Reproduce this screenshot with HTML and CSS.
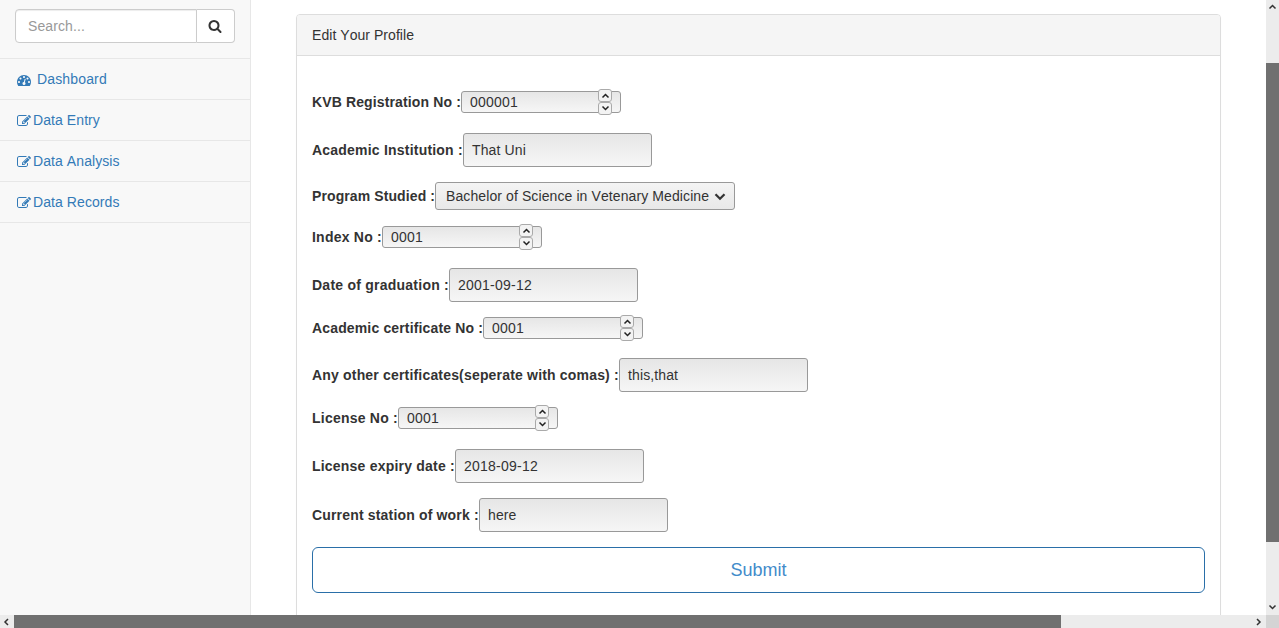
FILE: index.html
```html
<!DOCTYPE html>
<html lang="en">
<head>
<meta charset="utf-8">
<title>Edit Your Profile</title>
<link rel="stylesheet" href="styles.css">
</head>
<body>
<svg class="defs" width="0" height="0" aria-hidden="true">
  <symbol id="search" viewBox="0 0 1792 1792"><path d="M1216 832q0-185-131.5-316.5t-316.5-131.5-316.5 131.5-131.5 316.5 131.5 316.5 316.5 131.5 316.5-131.5 131.5-316.5zm512 832q0 52-38 90t-90 38q-54 0-90-38l-343-342q-179 124-399 124-143 0-273.5-55.5t-225-150-150-225-55.5-273.5 55.5-273.5 150-225 225-150 273.5-55.5 273.5 55.5 225 150 150 225 55.5 273.5q0 220-124 399l343 343q37 37 37 90z"/></symbol>
  <symbol id="edit" viewBox="0 0 1792 1792"><path d="M888 1184l116-116-152-152-116 116v56h96v96h56zm440-720q-16-16-33 1l-350 350q-17 17-1 33t33-1l350-350q17-17 1-33zm80 594v190q0 119-84.5 203.5t-203.5 84.5h-832q-119 0-203.5-84.5t-84.5-203.5v-832q0-119 84.5-203.5t203.5-84.5h832q63 0 117 25 15 7 18 23 3 17-9 29l-49 49q-14 14-32 8-23-6-45-6h-832q-66 0-113 47t-47 113v832q0 66 47 113t113 47h832q66 0 113-47t47-113v-126q0-13 9-22l64-64q15-15 35-7t20 29zm-96-738l288 288-672 672h-288v-288zm444 132l-92 92-288-288 92-92q28-28 68-28t68 28l152 152q28 28 28 68t-28 68z"/></symbol>
  <symbol id="gauge" viewBox="0 0 1792 1792"><path d="M384 1152q0-53-37.500-90.500t-90.500-37.500-90.500 37.500-37.500 90.500 37.500 90.500 90.500 37.500 90.500-37.500 37.500-90.500zm192-448q0-53-37.500-90.500t-90.500-37.500-90.500 37.500-37.500 90.500 37.500 90.500 90.500 37.500 90.500-37.500 37.500-90.500zm428 481l101-382q6-26-7.500-48.500t-38.500-29.500-48 6.500-30 39.500l-101 382q-60 5-107 43.500t-63 98.500q-20 77 20 146t117 89 146-20 89-117q16-60-6-117t-72-91zm660-33q0-53-37.500-90.500t-90.500-37.500-90.500 37.500-37.500 90.500 37.500 90.500 90.500 37.500 90.500-37.500 37.500-90.500zm-640-640q0-53-37.500-90.500t-90.500-37.500-90.500 37.500-37.500 90.500 37.500 90.500 90.500 37.500 90.500-37.500 37.500-90.500zm448 192q0-53-37.500-90.500t-90.500-37.500-90.500 37.500-37.500 90.500 37.500 90.500 90.500 37.500 90.500-37.500 37.500-90.500zm320 448q0 261-141 483-19 29-54 29h-1402q-35 0-54-29-141-221-141-483 0-182 71-348t191-286 286-191 348-71 348 71 286 191 191 286 71 348z"/></symbol>
  <symbol id="chev" viewBox="0 0 12 8"><path d="M2 2l4 4 4-4" fill="none" stroke="currentColor" stroke-width="2"/></symbol>
</svg>
<div class="window">
  <div class="view">
    <aside class="sidebar">
      <div class="search">
        <div class="search-text">Search...</div>
        <div class="search-btn"><svg class="fa"><use href="#search"/></svg></div>
      </div>
      <nav class="menu">
        <a class="item dash"><svg class="fa"><use href="#gauge"/></svg><span>Dashboard</span></a>
        <a class="item"><svg class="fa"><use href="#edit"/></svg><span>Data Entry</span></a>
        <a class="item"><svg class="fa"><use href="#edit"/></svg><span>Data Analysis</span></a>
        <a class="item"><svg class="fa"><use href="#edit"/></svg><span>Data Records</span></a>
      </nav>
    </aside>
    <main class="main">
      <section class="panel">
        <header class="heading">Edit Your Profile</header>
        <form class="form">
          <div class="row registration"><label>KVB Registration No :</label><div class="field number">000001<span class="spin"><i><svg class="up"><use href="#chev"/></svg></i><i><svg><use href="#chev"/></svg></i></span></div></div>
          <div class="row institution"><label>Academic Institution :</label><div class="field">That Uni</div></div>
          <div class="row program"><label>Program Studied :</label><div class="field select">Bachelor of Science in Vetenary Medicine<svg class="arrow"><use href="#chev"/></svg></div></div>
          <div class="row index"><label>Index No :</label><div class="field number">0001<span class="spin"><i><svg class="up"><use href="#chev"/></svg></i><i><svg><use href="#chev"/></svg></i></span></div></div>
          <div class="row graduation"><label>Date of graduation :</label><div class="field date">2001-09-12</div></div>
          <div class="row certificate"><label>Academic certificate No :</label><div class="field number">0001<span class="spin"><i><svg class="up"><use href="#chev"/></svg></i><i><svg><use href="#chev"/></svg></i></span></div></div>
          <div class="row others"><label>Any other certificates(seperate with comas) :</label><div class="field">this,that</div></div>
          <div class="row license"><label>License No :</label><div class="field number">0001<span class="spin"><i><svg class="up"><use href="#chev"/></svg></i><i><svg><use href="#chev"/></svg></i></span></div></div>
          <div class="row expiry"><label>License expiry date :</label><div class="field date">2018-09-12</div></div>
          <div class="row station"><label>Current station of work :</label><div class="field">here</div></div>
          <button class="submit" type="button">Submit</button>
        </form>
      </section>
    </main>
  </div>
  <div class="vbar"><svg class="up"><use href="#chev"/></svg><div class="vthumb"></div><svg><use href="#chev"/></svg></div>
  <div class="hbar"><svg class="left"><use href="#chev"/></svg><div class="hthumb"></div><svg class="right"><use href="#chev"/></svg></div>
  <div class="corner"></div>
</div>
</body>
</html>
```
FILE: styles.css
```css
* { box-sizing: border-box; }
body { margin: 0; overflow: hidden; background: #fff; color: #333; font: 14px/20px "Liberation Sans", Arial, sans-serif; font-kerning: none; }
svg { display: block; fill: currentColor; }
.defs { position: absolute; }
.window { width: 1279px; height: 628px; display: grid; grid-template: 615px 13px / 1266px 13px; }
.view { display: flex; overflow: hidden; }

.sidebar { width: 251px; background: #f8f8f8; border-right: 1px solid #e7e7e7; color: #337ab7; }
.search { display: flex; height: 34px; width: 220px; margin: 9px 15px 15px; }
.search-text { width: 182px; border: 1px solid #ccc; border-radius: 4px 0 0 4px; background: #fff; box-shadow: inset 0 1px 1px rgba(0, 0, 0, .075); color: #999; padding: 6px 12px; letter-spacing: .1px; }
.search-btn { width: 38px; border: 1px solid #ccc; border-left: 0; border-radius: 0 4px 4px 0; background: #fff; color: #333; padding: 9px 11px; }
.fa { width: 14px; height: 14px; flex: none; }
.menu { border-top: 1px solid #e7e7e7; }
.item { display: flex; align-items: center; height: 41px; padding-left: 17px; border-bottom: 1px solid #e7e7e7; letter-spacing: .08px; gap: 2px; }
.item .fa { margin-top: 1px; }
.dash { gap: 6px; letter-spacing: .15px; }

.main { flex: 1; padding: 14px 45px 0; }
.panel { height: 660px; border: 1px solid #ddd; border-radius: 4px; box-shadow: 0 1px 1px rgba(0, 0, 0, .05); }
.heading { height: 41px; padding: 10px 15px; background: #f5f5f5; border-bottom: 1px solid #ddd; border-radius: 3px 3px 0 0; letter-spacing: .05px; }
.form { display: flex; flex-direction: column; padding: 35px 15px 0; }
.row { display: flex; align-items: center; }
label { font-weight: bold; white-space: nowrap; flex: none; }
.field { width: 189px; height: 34px; border: 1px solid #999; border-radius: 3px; background: linear-gradient(#e6e6e6, #f6f6f6); padding: 6px 8px; letter-spacing: .12px; }
.date { letter-spacing: .24px; }
.number { position: relative; width: 160px; height: 22px; padding: 0 8px; letter-spacing: .22px; }
.select { display: flex; justify-content: space-between; align-items: center; width: 300px; height: 28px; padding: 0 7px 0 10px; background: linear-gradient(#f4f4f4, #e8e8e8); letter-spacing: .1px; white-space: nowrap; }
.arrow { width: 14px; height: 9px; }
.spin { position: absolute; left: 136px; top: -3px; width: 14px; }
.spin i { display: flex; justify-content: center; height: 13px; border: 1px solid #aaa; border-radius: 3px; background: #f3f3f3; color: #222; }
.spin svg { width: 9px; height: 6px; margin-top: 3px; }
.spin i + i svg { margin-top: 2px; }
.up { transform: rotate(180deg); }

.registration label { width: 149px; letter-spacing: .13px; }
.institution { margin-top: 20px; }
.institution label { width: 151px; letter-spacing: .21px; }
.program { margin-top: 15px; }
.program label { width: 123px; letter-spacing: .1px; }
.index { margin-top: 16px; }
.index label { width: 70px; letter-spacing: .23px; }
.graduation { margin-top: 20px; }
.graduation label { width: 137px; letter-spacing: .24px; }
.certificate { margin-top: 15px; }
.certificate label { width: 171px; letter-spacing: .15px; }
.others { margin-top: 19px; }
.others label { width: 307px; letter-spacing: .18px; }
.license { margin-top: 15px; }
.license label { width: 86px; letter-spacing: .23px; }
.expiry { margin-top: 20px; }
.expiry label { width: 143px; letter-spacing: .21px; }
.station { margin-top: 15px; }
.station label { width: 167px; letter-spacing: .17px; }
.submit { height: 46px; margin-top: 15px; padding: 0; border: 1px solid #2a6fa8; border-radius: 6px; background: #fff; color: #428bca; font: 18px/24px "Liberation Sans", Arial, sans-serif; }

.vbar, .hbar { display: flex; align-items: center; background: #ececec; color: #333; }
.vbar { flex-direction: column; }
.vbar svg, .hbar svg { width: 9px; height: 6px; flex: none; }
.vbar svg { margin: 4px 0 3px; }
.vthumb { width: 13px; height: 479px; margin: 50px 0 58px; background: #707070; }
.hbar svg { margin: 0 2px 0 2px; }
.hthumb { width: 1047px; height: 13px; margin: 0 191px 0 1px; background: #707070; }
.left { transform: rotate(90deg); }
.right { transform: rotate(-90deg); }
.corner { background: #d4d4d4; }
```
